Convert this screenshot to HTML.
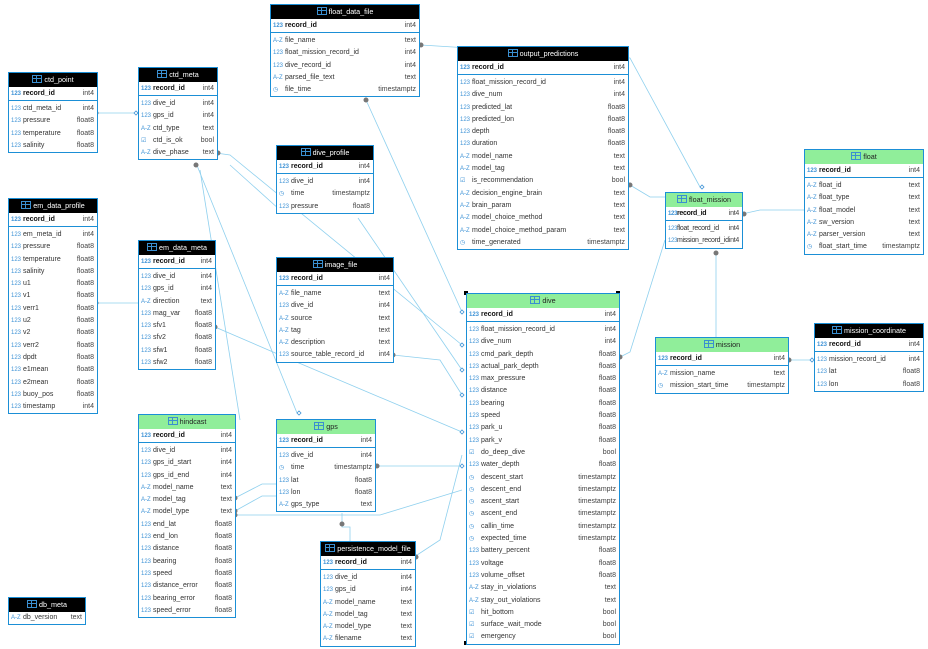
<!DOCTYPE html>
<html><head><meta charset="utf-8"><style>
body{margin:0;width:928px;height:649px;background:#fff;position:relative;overflow:hidden;font-family:"Liberation Sans",sans-serif}
svg{position:absolute;left:0;top:0}
.t{position:absolute;border:1.5px solid #1b8fd6;background:#fff;font-size:7px;color:#333;box-sizing:content-box}
.h{height:14px;background:#000;color:#fff;text-align:center;line-height:14px;font-size:7.2px}
.g .h{background:#90ee9a;color:#222}
.h:before{content:"";display:inline-block;width:8px;height:6px;border:1px solid #3a8fd0;margin-right:2px;vertical-align:-1px;background:linear-gradient(#3a8fd0,#3a8fd0) 0 2px/100% 1px no-repeat,linear-gradient(#3a8fd0,#3a8fd0) 3px 0/1px 100% no-repeat}
.r{height:12.3px;line-height:12.3px;padding:0 3px 0 2px;display:flex;white-space:nowrap}
.r span:last-child{margin-left:auto;color:#444}
.pk{height:13px;line-height:13px;border-bottom:1px solid #1b8fd6;margin-bottom:2px;color:#111;font-weight:bold}
.pk span:last-child{font-weight:normal}
i{font-style:normal;color:#3f93d6;font-size:6px;margin-right:2px;display:inline-block;width:10px}
.sm .r{letter-spacing:-0.3px}
.sm i{width:8px;margin-right:1px}
</style></head><body>
<svg width="928" height="649" fill="none" stroke="#8fd0ee" stroke-width="0.8">
<path d="M96 113H134"/>
<path d="M196 163L297 413"/>
<path d="M216 153L230 155L462 345"/>
<path d="M421 45L630 58L700 187"/>
<path d="M366 100L462 312"/>
<path d="M358 218L462 370"/>
<path d="M393 355L440 360L462 395"/>
<path d="M215 327L280 355L462 432"/>
<path d="M96 303H138"/>
<path d="M235 498L262 484H276"/>
<path d="M235 511L262 496H276"/>
<path d="M235 515L380 515L462 490"/>
<path d="M376 466H462"/>
<path d="M342 513V527H350V541"/>
<path d="M414 557L440 540L462 455"/>
<path d="M620 357L630 352L665 240"/>
<path d="M630 185L650 197H665"/>
<path d="M742 214L760 210H804"/>
<path d="M716 253V337"/>
<path d="M787 360H812"/>
<path d="M230 165L280 210"/>
<path d="M200 170L240 420"/>
<g fill="#777" stroke="none">
<circle cx="96" cy="113" r="2.5"/><circle cx="196" cy="165" r="2.5"/><circle cx="218" cy="153" r="2.5"/><circle cx="421" cy="45" r="2.5"/><circle cx="366" cy="100" r="2.5"/><circle cx="393" cy="355" r="2.5"/><circle cx="215" cy="327" r="2.5"/><circle cx="96" cy="303" r="2.5"/><circle cx="235" cy="498" r="2.5"/><circle cx="235" cy="511" r="2.5"/><circle cx="235" cy="515" r="2.5"/><circle cx="377" cy="466" r="2.5"/><circle cx="342" cy="524" r="2.5"/><circle cx="416" cy="557" r="2.5"/><circle cx="620" cy="357" r="2.5"/><circle cx="630" cy="185" r="2.5"/><circle cx="744" cy="214" r="2.5"/><circle cx="716" cy="253" r="2.5"/><circle cx="789" cy="360" r="2.5"/>
</g>
<g stroke="#3f93d6" fill="#fff">
<path d="M134 113l2-2 2 2-2 2z"/><path d="M297 413l2-2 2 2-2 2z"/><path d="M700 187l2-2 2 2-2 2z"/><path d="M460 312l2-2 2 2-2 2z"/><path d="M460 345l2-2 2 2-2 2z"/><path d="M460 370l2-2 2 2-2 2z"/><path d="M460 395l2-2 2 2-2 2z"/><path d="M460 432l2-2 2 2-2 2z"/><path d="M460 466l2-2 2 2-2 2z"/><path d="M810 360l2-2 2 2-2 2z"/>
</g>
<g fill="#000" stroke="none"><rect x="464" y="291" width="4" height="4"/><rect x="616" y="291" width="4" height="4"/><rect x="464" y="641" width="4" height="4"/><rect x="616" y="641" width="4" height="4"/></g>
</svg>

<div class="t" style="left:8px;top:72px;width:88px"><div class="h">ctd_point</div>
<div class="r pk"><span><i>123</i>record_id</span><span>int4</span></div>
<div class="r"><span><i>123</i>ctd_meta_id</span><span>int4</span></div>
<div class="r"><span><i>123</i>pressure</span><span>float8</span></div>
<div class="r"><span><i>123</i>temperature</span><span>float8</span></div>
<div class="r"><span><i>123</i>salinity</span><span>float8</span></div></div>

<div class="t" style="left:138px;top:67px;width:78px"><div class="h">ctd_meta</div>
<div class="r pk"><span><i>123</i>record_id</span><span>int4</span></div>
<div class="r"><span><i>123</i>dive_id</span><span>int4</span></div>
<div class="r"><span><i>123</i>gps_id</span><span>int4</span></div>
<div class="r"><span><i>A-Z</i>ctd_type</span><span>text</span></div>
<div class="r"><span><i>☑</i>ctd_is_ok</span><span>bool</span></div>
<div class="r"><span><i>A-Z</i>dive_phase</span><span>text</span></div></div>

<div class="t" style="left:8px;top:198px;width:88px"><div class="h">em_data_profile</div>
<div class="r pk"><span><i>123</i>record_id</span><span>int4</span></div>
<div class="r"><span><i>123</i>em_meta_id</span><span>int4</span></div>
<div class="r"><span><i>123</i>pressure</span><span>float8</span></div>
<div class="r"><span><i>123</i>temperature</span><span>float8</span></div>
<div class="r"><span><i>123</i>salinity</span><span>float8</span></div>
<div class="r"><span><i>123</i>u1</span><span>float8</span></div>
<div class="r"><span><i>123</i>v1</span><span>float8</span></div>
<div class="r"><span><i>123</i>verr1</span><span>float8</span></div>
<div class="r"><span><i>123</i>u2</span><span>float8</span></div>
<div class="r"><span><i>123</i>v2</span><span>float8</span></div>
<div class="r"><span><i>123</i>verr2</span><span>float8</span></div>
<div class="r"><span><i>123</i>dpdt</span><span>float8</span></div>
<div class="r"><span><i>123</i>e1mean</span><span>float8</span></div>
<div class="r"><span><i>123</i>e2mean</span><span>float8</span></div>
<div class="r"><span><i>123</i>buoy_pos</span><span>float8</span></div>
<div class="r"><span><i>123</i>timestamp</span><span>int4</span></div></div>

<div class="t" style="left:138px;top:240px;width:76px"><div class="h">em_data_meta</div>
<div class="r pk"><span><i>123</i>record_id</span><span>int4</span></div>
<div class="r"><span><i>123</i>dive_id</span><span>int4</span></div>
<div class="r"><span><i>123</i>gps_id</span><span>int4</span></div>
<div class="r"><span><i>A-Z</i>direction</span><span>text</span></div>
<div class="r"><span><i>123</i>mag_var</span><span>float8</span></div>
<div class="r"><span><i>123</i>sfv1</span><span>float8</span></div>
<div class="r"><span><i>123</i>sfv2</span><span>float8</span></div>
<div class="r"><span><i>123</i>sfw1</span><span>float8</span></div>
<div class="r"><span><i>123</i>sfw2</span><span>float8</span></div></div>

<div class="t" style="left:8px;top:597px;width:76px"><div class="h">db_meta</div>
<div class="r"><span><i>A-Z</i>db_version</span><span>text</span></div></div>

<div class="t g" style="left:138px;top:414px;width:96px"><div class="h">hindcast</div>
<div class="r pk"><span><i>123</i>record_id</span><span>int4</span></div>
<div class="r"><span><i>123</i>dive_id</span><span>int4</span></div>
<div class="r"><span><i>123</i>gps_id_start</span><span>int4</span></div>
<div class="r"><span><i>123</i>gps_id_end</span><span>int4</span></div>
<div class="r"><span><i>A-Z</i>model_name</span><span>text</span></div>
<div class="r"><span><i>A-Z</i>model_tag</span><span>text</span></div>
<div class="r"><span><i>A-Z</i>model_type</span><span>text</span></div>
<div class="r"><span><i>123</i>end_lat</span><span>float8</span></div>
<div class="r"><span><i>123</i>end_lon</span><span>float8</span></div>
<div class="r"><span><i>123</i>distance</span><span>float8</span></div>
<div class="r"><span><i>123</i>bearing</span><span>float8</span></div>
<div class="r"><span><i>123</i>speed</span><span>float8</span></div>
<div class="r"><span><i>123</i>distance_error</span><span>float8</span></div>
<div class="r"><span><i>123</i>bearing_error</span><span>float8</span></div>
<div class="r"><span><i>123</i>speed_error</span><span>float8</span></div></div>

<div class="t" style="left:270px;top:4px;width:148px"><div class="h">float_data_file</div>
<div class="r pk"><span><i>123</i>record_id</span><span>int4</span></div>
<div class="r"><span><i>A-Z</i>file_name</span><span>text</span></div>
<div class="r"><span><i>123</i>float_mission_record_id</span><span>int4</span></div>
<div class="r"><span><i>123</i>dive_record_id</span><span>int4</span></div>
<div class="r"><span><i>A-Z</i>parsed_file_text</span><span>text</span></div>
<div class="r"><span><i>◷</i>file_time</span><span>timestamptz</span></div></div>

<div class="t" style="left:276px;top:145px;width:96px"><div class="h">dive_profile</div>
<div class="r pk"><span><i>123</i>record_id</span><span>int4</span></div>
<div class="r"><span><i>123</i>dive_id</span><span>int4</span></div>
<div class="r"><span><i>◷</i>time</span><span>timestamptz</span></div>
<div class="r"><span><i>123</i>pressure</span><span>float8</span></div></div>

<div class="t" style="left:276px;top:257px;width:116px"><div class="h">image_file</div>
<div class="r pk"><span><i>123</i>record_id</span><span>int4</span></div>
<div class="r"><span><i>A-Z</i>file_name</span><span>text</span></div>
<div class="r"><span><i>123</i>dive_id</span><span>int4</span></div>
<div class="r"><span><i>A-Z</i>source</span><span>text</span></div>
<div class="r"><span><i>A-Z</i>tag</span><span>text</span></div>
<div class="r"><span><i>A-Z</i>description</span><span>text</span></div>
<div class="r"><span><i>123</i>source_table_record_id</span><span>int4</span></div></div>

<div class="t g" style="left:276px;top:419px;width:98px"><div class="h">gps</div>
<div class="r pk"><span><i>123</i>record_id</span><span>int4</span></div>
<div class="r"><span><i>123</i>dive_id</span><span>int4</span></div>
<div class="r"><span><i>◷</i>time</span><span>timestamptz</span></div>
<div class="r"><span><i>123</i>lat</span><span>float8</span></div>
<div class="r"><span><i>123</i>lon</span><span>float8</span></div>
<div class="r"><span><i>A-Z</i>gps_type</span><span>text</span></div></div>

<div class="t" style="left:320px;top:541px;width:94px"><div class="h">persistence_model_file</div>
<div class="r pk"><span><i>123</i>record_id</span><span>int4</span></div>
<div class="r"><span><i>123</i>dive_id</span><span>int4</span></div>
<div class="r"><span><i>123</i>gps_id</span><span>int4</span></div>
<div class="r"><span><i>A-Z</i>model_name</span><span>text</span></div>
<div class="r"><span><i>A-Z</i>model_tag</span><span>text</span></div>
<div class="r"><span><i>A-Z</i>model_type</span><span>text</span></div>
<div class="r"><span><i>A-Z</i>filename</span><span>text</span></div></div>

<div class="t" style="left:457px;top:46px;width:170px"><div class="h">output_predictions</div>
<div class="r pk"><span><i>123</i>record_id</span><span>int4</span></div>
<div class="r"><span><i>123</i>float_mission_record_id</span><span>int4</span></div>
<div class="r"><span><i>123</i>dive_num</span><span>int4</span></div>
<div class="r"><span><i>123</i>predicted_lat</span><span>float8</span></div>
<div class="r"><span><i>123</i>predicted_lon</span><span>float8</span></div>
<div class="r"><span><i>123</i>depth</span><span>float8</span></div>
<div class="r"><span><i>123</i>duration</span><span>float8</span></div>
<div class="r"><span><i>A-Z</i>model_name</span><span>text</span></div>
<div class="r"><span><i>A-Z</i>model_tag</span><span>text</span></div>
<div class="r"><span><i>☑</i>is_recommendation</span><span>bool</span></div>
<div class="r"><span><i>A-Z</i>decision_engine_brain</span><span>text</span></div>
<div class="r"><span><i>A-Z</i>brain_param</span><span>text</span></div>
<div class="r"><span><i>A-Z</i>model_choice_method</span><span>text</span></div>
<div class="r"><span><i>A-Z</i>model_choice_method_param</span><span>text</span></div>
<div class="r"><span><i>◷</i>time_generated</span><span>timestamptz</span></div></div>

<div class="t g" style="left:466px;top:293px;width:152px"><div class="h">dive</div>
<div class="r pk"><span><i>123</i>record_id</span><span>int4</span></div>
<div class="r"><span><i>123</i>float_mission_record_id</span><span>int4</span></div>
<div class="r"><span><i>123</i>dive_num</span><span>int4</span></div>
<div class="r"><span><i>123</i>cmd_park_depth</span><span>float8</span></div>
<div class="r"><span><i>123</i>actual_park_depth</span><span>float8</span></div>
<div class="r"><span><i>123</i>max_pressure</span><span>float8</span></div>
<div class="r"><span><i>123</i>distance</span><span>float8</span></div>
<div class="r"><span><i>123</i>bearing</span><span>float8</span></div>
<div class="r"><span><i>123</i>speed</span><span>float8</span></div>
<div class="r"><span><i>123</i>park_u</span><span>float8</span></div>
<div class="r"><span><i>123</i>park_v</span><span>float8</span></div>
<div class="r"><span><i>☑</i>do_deep_dive</span><span>bool</span></div>
<div class="r"><span><i>123</i>water_depth</span><span>float8</span></div>
<div class="r"><span><i>◷</i>descent_start</span><span>timestamptz</span></div>
<div class="r"><span><i>◷</i>descent_end</span><span>timestamptz</span></div>
<div class="r"><span><i>◷</i>ascent_start</span><span>timestamptz</span></div>
<div class="r"><span><i>◷</i>ascent_end</span><span>timestamptz</span></div>
<div class="r"><span><i>◷</i>callin_time</span><span>timestamptz</span></div>
<div class="r"><span><i>◷</i>expected_time</span><span>timestamptz</span></div>
<div class="r"><span><i>123</i>battery_percent</span><span>float8</span></div>
<div class="r"><span><i>123</i>voltage</span><span>float8</span></div>
<div class="r"><span><i>123</i>volume_offset</span><span>float8</span></div>
<div class="r"><span><i>A-Z</i>stay_in_violations</span><span>text</span></div>
<div class="r"><span><i>A-Z</i>stay_out_violations</span><span>text</span></div>
<div class="r"><span><i>☑</i>hit_bottom</span><span>bool</span></div>
<div class="r"><span><i>☑</i>surface_wait_mode</span><span>bool</span></div>
<div class="r"><span><i>☑</i>emergency</span><span>bool</span></div></div>

<div class="t g sm" style="left:665px;top:192px;width:76px"><div class="h">float_mission</div>
<div class="r pk"><span><i>123</i>record_id</span><span>int4</span></div>
<div class="r"><span><i>123</i>float_record_id</span><span>int4</span></div>
<div class="r"><span><i>123</i>mission_record_id</span><span>int4</span></div></div>

<div class="t g" style="left:804px;top:149px;width:118px"><div class="h">float</div>
<div class="r pk"><span><i>123</i>record_id</span><span>int4</span></div>
<div class="r"><span><i>A-Z</i>float_id</span><span>text</span></div>
<div class="r"><span><i>A-Z</i>float_type</span><span>text</span></div>
<div class="r"><span><i>A-Z</i>float_model</span><span>text</span></div>
<div class="r"><span><i>A-Z</i>sw_version</span><span>text</span></div>
<div class="r"><span><i>A-Z</i>parser_version</span><span>text</span></div>
<div class="r"><span><i>◷</i>float_start_time</span><span>timestamptz</span></div></div>

<div class="t g" style="left:655px;top:337px;width:132px"><div class="h">mission</div>
<div class="r pk"><span><i>123</i>record_id</span><span>int4</span></div>
<div class="r"><span><i>A-Z</i>mission_name</span><span>text</span></div>
<div class="r"><span><i>◷</i>mission_start_time</span><span>timestamptz</span></div></div>

<div class="t" style="left:814px;top:323px;width:108px"><div class="h">mission_coordinate</div>
<div class="r pk"><span><i>123</i>record_id</span><span>int4</span></div>
<div class="r"><span><i>123</i>mission_record_id</span><span>int4</span></div>
<div class="r"><span><i>123</i>lat</span><span>float8</span></div>
<div class="r"><span><i>123</i>lon</span><span>float8</span></div></div>
</body></html>
